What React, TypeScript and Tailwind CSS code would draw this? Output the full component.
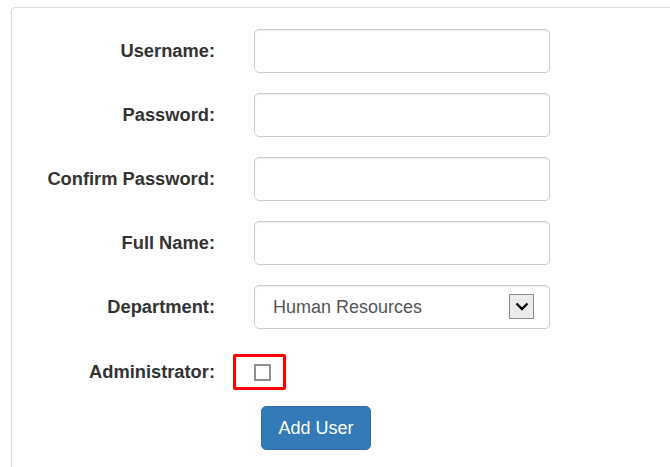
import { useState } from "react";

const departments = ["Human Resources", "Finance", "IT", "Sales", "Operations"];

function Field({ label, children }: { label: string; children: React.ReactNode }) {
  return (
    <div className="flex items-center">
      <label className="w-[203px] shrink-0 text-right text-[18.3px] font-bold text-[#333]">{label}</label>
      <div className="ml-[39px]">{children}</div>
    </div>
  );
}

function TextInput({ type = "text" }: { type?: string }) {
  return (
    <input
      type={type}
      className="block h-[44px] w-[296px] rounded-[5px] border border-[#ccc] bg-white px-[16px] text-[18px] text-[#555] shadow-[inset_0_1px_1px_rgba(0,0,0,0.075)] outline-none"
    />
  );
}

export default function App() {
  const [dept, setDept] = useState(departments[0]);
  const [admin, setAdmin] = useState(false);

  return (
    <div className="h-[467px] w-[670px] overflow-hidden bg-white font-['Liberation_Sans',Arial,sans-serif]">
      <div className="ml-[11px] mt-[7px] h-[520px] w-[720px] rounded-tl-[4px] border border-[#ddd] pt-[21px]">
        <div className="flex flex-col gap-[20px]">
          <Field label="Username:">
            <TextInput />
          </Field>
          <Field label="Password:">
            <TextInput type="password" />
          </Field>
          <Field label="Confirm Password:">
            <TextInput type="password" />
          </Field>
          <Field label="Full Name:">
            <TextInput />
          </Field>
          <Field label="Department:">
            <div className="relative">
              <select
                value={dept}
                onChange={(e) => setDept(e.target.value)}
                className="block h-[44px] w-[296px] appearance-none rounded-[5px] border border-[#ccc] bg-white pl-[18px] text-[18px] text-[#555] shadow-[inset_0_1px_1px_rgba(0,0,0,0.075)] outline-none"
              >
                {departments.map((d) => (
                  <option key={d}>{d}</option>
                ))}
              </select>
              {/* classic dropdown button */}
              <span className="pointer-events-none absolute right-[16px] top-[9px] flex h-[25px] w-[25px] items-center justify-center border border-[#8d8d8d] bg-[#ececec]">
                <svg width="14" height="9" viewBox="0 0 14 9">
                  <path d="M1.5 1.5 L7 7 L12.5 1.5" fill="none" stroke="#000" strokeWidth="2.4" />
                </svg>
              </span>
            </div>
          </Field>
        </div>

        <div className="mt-[25px]">
          <Field label="Administrator:">
            <div className="relative flex h-[36px] items-center">
              <span className="pointer-events-none absolute -left-[21px] top-0 h-[36px] w-[53px] rounded-[2px] border-[3px] border-[#ff0000]" />
              <input
                type="checkbox"
                checked={admin}
                onChange={(e) => setAdmin(e.target.checked)}
                className="h-[17px] w-[17px] appearance-none border-2 border-[#8f8f8f] bg-white checked:bg-[#337ab7]"
              />
            </div>
          </Field>
        </div>

        <div className="ml-[249px] mt-[16px]">
          <button className="h-[44px] w-[110px] rounded-[5px] border border-[#2e6da4] bg-[#337ab7] text-[18px] text-white">
            Add User
          </button>
        </div>
      </div>
    </div>
  );
}
